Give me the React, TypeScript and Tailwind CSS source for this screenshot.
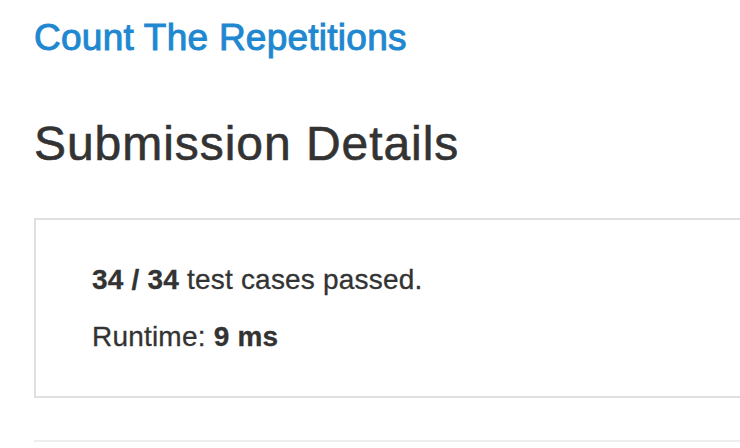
import React from "react";

export default function App() {
  return (
    <div className="w-[740px] h-[448px] overflow-hidden bg-white pl-[34px] font-['Liberation_Sans',Arial,sans-serif] text-[#333333]">
      <div className="pt-[19px]">
        <a className="block text-[37px] leading-[37px] tracking-[0.25px] text-[#1f88d0] whitespace-nowrap [-webkit-text-stroke:1px_#1f88d0]" href="#">
          Count The Repetitions
        </a>
      </div>
      <h1 className="mt-[64px] text-[48px] leading-[48px] tracking-[0.95px] whitespace-nowrap [-webkit-text-stroke:0.6px_#333333]">
        Submission Details
      </h1>
      <div className="mt-[50px] w-[760px] border-2 border-[#e0e0e0] pl-[56px] pt-[46px] pb-[45px] [-webkit-text-stroke:0.3px_#333333]">
        <div className="text-[28px] leading-[28px] tracking-[0.2px] whitespace-nowrap">
          <span className="font-bold">34 / 34</span> test cases passed.
        </div>
        <div className="mt-[29px] text-[28px] leading-[28px] tracking-[0.2px] whitespace-nowrap">
          Runtime: <span className="font-bold">9 ms</span>
        </div>
      </div>
      <div className="mt-[42px] w-[760px] h-[2px] bg-[#eeeeee]" />
    </div>
  );
}
